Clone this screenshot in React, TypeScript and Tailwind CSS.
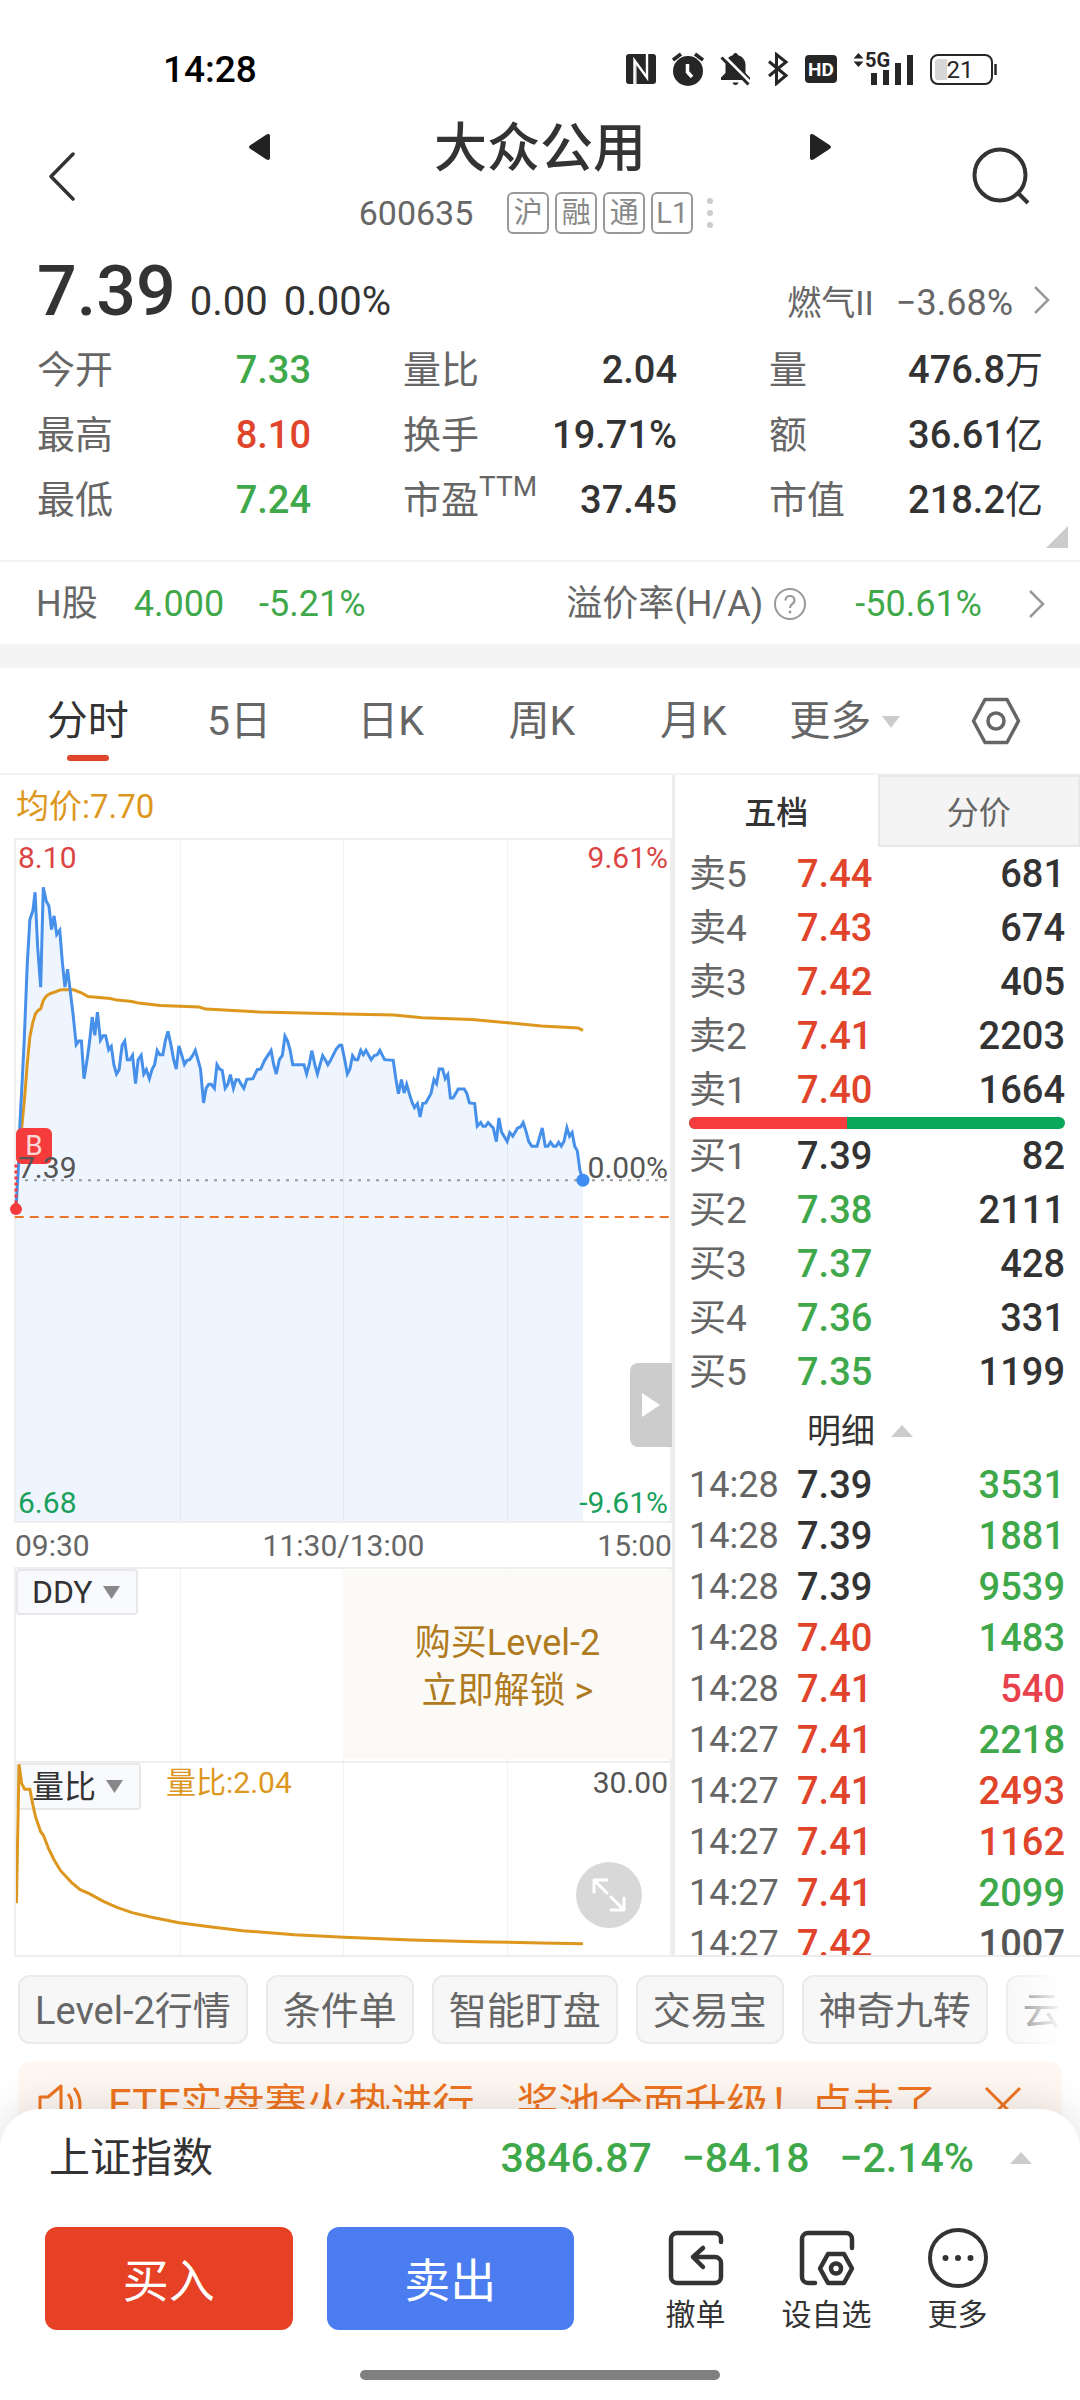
import React from 'react';

const PRICE_POINTS =
  '37,1137 43,1000 46,880 51,760 56,630 63,400 69,268 76,240 81,185 87,350 94,470 100,170 107,212 113,226 119,297 125,256 131,312 138,299 144,395 150,470 156,416 163,490 169,555 176,643 182,632 188,632 194,745 201,690 207,632 213,560 219,615 225,545 232,629 238,616 244,616 251,658 257,648 263,703 269,731 275,718 282,645 288,632 294,688 300,688 306,675 313,760 319,688 326,675 332,731 338,718 345,745 351,718 357,703 363,660 369,673 376,673 382,630 388,603 395,645 401,688 407,716 413,647 420,675 426,702 432,690 438,688 445,675 451,660 457,688 463,716 470,818 476,774 482,762 488,762 495,774 501,703 507,716 513,720 520,774 526,762 532,733 539,774 545,748 551,748 557,762 563,774 570,747 584,745 594,718 602,716 611,690 626,660 632,703 638,731 645,688 652,675 658,617 664,632 670,660 676,703 702,703 708,731 714,703 720,661 727,703 733,731 739,703 745,676 751,688 757,703 764,688 776,657 784,645 789,645 796,688 802,731 808,716 814,676 820,688 826,688 833,660 839,673 845,660 857,688 864,676 871,673 877,660 888,688 908,690 914,745 920,790 927,748 933,788 939,762 945,790 952,818 957,832 964,820 970,860 976,820 983,818 995,790 1002,748 1008,760 1014,716 1022,716 1028,745 1034,733 1040,803 1046,803 1052,790 1058,776 1072,776 1078,790 1084,818 1096,820 1102,888 1110,877 1115,888 1121,888 1127,877 1139,893 1146,934 1152,863 1158,905 1171,934 1177,907 1184,918 1195,893 1202,890 1208,877 1215,905 1221,934 1228,948 1240,948 1246,920 1252,893 1259,948 1265,948 1271,936 1278,948 1284,948 1290,936 1296,948 1302,934 1309,893 1315,918 1321,907 1327,948 1333,962 1339,1020 1346,1050';

const AVERAGE_POINTS =
  '43,1000 50,895 57,800 63,700 69,620 76,575 82,550 88,540 94,535 100,510 107,497 115,490 128,484 140,478 170,478 188,487 203,498 255,504 270,509 305,513 320,518 370,525 460,530 475,536 600,545 795,551 910,554 975,562 1090,567 1165,576 1250,587 1335,593 1346,600';

const RATIO_POINTS =
  '38,1210 44,793 50,850 57,868 69,868 76,915 82,950 94,995 100,1005 112,1045 125,1080 140,1112 165,1147 185,1169 205,1180 240,1205 270,1222 305,1238 350,1252 414,1268 475,1279 560,1292 680,1304 795,1312 950,1320 1100,1325 1250,1329 1346,1331';

const RED = 'text-[#e0442a]';
const GREEN = 'text-[#3fa84a]';
const DARK = 'text-[#333333]';

const STATS = [
  { label: '今开', value: '7.33', tone: GREEN },
  { label: '量比', value: '2.04', tone: DARK },
  { label: '量', value: '476.8', unit: '万', tone: DARK },
  { label: '最高', value: '8.10', tone: RED },
  { label: '换手', value: '19.71%', tone: DARK },
  { label: '额', value: '36.61', unit: '亿', tone: DARK },
  { label: '最低', value: '7.24', tone: GREEN },
  { label: '市盈', sup: 'TTM', value: '37.45', tone: DARK },
  { label: '市值', value: '218.2', unit: '亿', tone: DARK },
];

type Quote = [string, string, string, string];

const SELLS: Quote[] = [
  ['卖5', '7.44', RED, '681'],
  ['卖4', '7.43', RED, '674'],
  ['卖3', '7.42', RED, '405'],
  ['卖2', '7.41', RED, '2203'],
  ['卖1', '7.40', RED, '1664'],
];

const BUYS: Quote[] = [
  ['买1', '7.39', DARK, '82'],
  ['买2', '7.38', GREEN, '2111'],
  ['买3', '7.37', GREEN, '428'],
  ['买4', '7.36', GREEN, '331'],
  ['买5', '7.35', GREEN, '1199'],
];

const TRADES: [string, string, string, string, string][] = [
  ['14:28', '7.39', DARK, '3531', GREEN],
  ['14:28', '7.39', DARK, '1881', GREEN],
  ['14:28', '7.39', DARK, '9539', GREEN],
  ['14:28', '7.40', RED, '1483', GREEN],
  ['14:28', '7.41', RED, '540', 'text-[#e8414b]'],
  ['14:27', '7.41', RED, '2218', GREEN],
  ['14:27', '7.41', RED, '2493', RED],
  ['14:27', '7.41', RED, '1162', RED],
  ['14:27', '7.41', RED, '2099', GREEN],
  ['14:27', '7.42', RED, '1007', 'text-[#555555]'],
];

const CHIPS = ['Level-2行情', '条件单', '智能盯盘', '交易宝', '神奇九转', '云参数'];

function StatusBar() {
  return (
    <div className="flex h-[117px] items-center justify-between pt-[21px] pr-[83px] pl-[163px]">
      <time className="text-[37px] leading-none font-medium text-black">14:28</time>
      <div className="flex items-center gap-4 text-[#262626]">
        <svg width="30" height="30" viewBox="0 0 30 30" aria-label="NFC">
          <rect width="30" height="30" rx="3" fill="currentColor" />
          <path d="M8.500 30V6.500L21 23.500V0" fill="none" stroke="#fff" strokeWidth="2.400" />
          <path d="M10 9v21M21 0v18" fill="none" stroke="#fff" strokeWidth="1" />
        </svg>
        <svg width="32" height="34" viewBox="0 0 32 34" aria-label="闹钟">
          <circle cx="16" cy="19" r="15" fill="currentColor" />
          <path d="M1 8l8-6M31 8l-8-6" stroke="currentColor" strokeWidth="3.500" />
          <path d="M15.500 12v8l4.500 5" fill="none" stroke="#fff" strokeWidth="3.500" />
        </svg>
        <svg width="31" height="34" viewBox="0 0 31 34" aria-label="静音">
          <path d="M15.500 1c1.500 0 2.500 1 2.500 2.300 4.500 1.200 7.500 5 7.500 9.700v8l4.500 4.500V28H1v-2.500L5.500 21v-8c0-4.700 3-8.500 7.500-9.700C13 2 14 1 15.500 1z" fill="currentColor" />
          <path d="M12.500 30.500h6c-.5 1.700-1.500 2.500-3 2.500s-2.500-.8-3-2.500z" fill="currentColor" />
          <path d="M3.500 3.500l27 27" stroke="#fff" strokeWidth="3" />
          <path d="M1.500 5.500l27 27" stroke="currentColor" strokeWidth="3" />
        </svg>
        <svg width="22" height="34" viewBox="0 0 22 34" aria-label="蓝牙">
          <path d="M2 9.500l17 14-9.500 8v-29l9.500 7.500-17 14" fill="none" stroke="currentColor" strokeWidth="3" />
        </svg>
        <svg width="32" height="28" viewBox="0 0 32 28" aria-label="HD">
          <rect width="32" height="28" rx="4" fill="currentColor" />
          <text x="16" y="21" textAnchor="middle" fill="#fff" fontSize="19" fontWeight="700" fontFamily="Roboto">HD</text>
        </svg>
        <svg className="overflow-visible" width="61" height="34" viewBox="0 0 61 34" aria-label="5G">
          <path d="M5.500 1l5 5.500h-10zM5.500 15l5-5.500h-10z" fill="currentColor" />
          <text x="12" y="15" fill="currentColor" fontSize="20" fontWeight="700" fontFamily="Roboto">5G</text>
          <path d="M18 21h6v12h-6zM30 18h6v15h-6zM42 11h6v22h-6zM54 3h6v30h-6z" fill="currentColor" />
        </svg>
        <svg width="67" height="31" viewBox="0 0 67 31" aria-label="电量 21">
          <rect x="1" y="1" width="61" height="29" rx="7" fill="#fff" stroke="currentColor" strokeWidth="2" />
          <path d="M8 5h9v21H8a3 3 0 0 1-3-3V8a3 3 0 0 1 3-3z" fill="#d6d6d6" />
          <path d="M65.500 10v11" stroke="currentColor" strokeWidth="2.500" />
          <text x="30" y="24" textAnchor="middle" fill="currentColor" fontSize="24" fontFamily="Roboto">21</text>
        </svg>
      </div>
    </div>
  );
}

function Header() {
  return (
    <header className="flex items-center justify-between pr-[48px] pl-[46px]">
      <button className="w-[62px]" aria-label="返回">
        <svg width="32" height="50" viewBox="0 0 32 50" fill="none" stroke="#333" strokeWidth="3.500" strokeLinecap="round" strokeLinejoin="round">
          <path d="M27 3L5 25.500 27 48" />
        </svg>
      </button>
      <div className="w-[582px]">
        <div className="flex h-[60px] items-center justify-between">
          <button aria-label="上一只">
            <svg width="21" height="26" viewBox="0 0 21 26"><path d="M21 2v22c0 2-2 2.500-3.500 1.500L1.500 15c-2-1.300-2-2.700 0-4L17.500.6C19-.4 21 0 21 2z" fill="#222" /></svg>
          </button>
          <h1 className="pt-1 text-[53px] leading-none font-medium text-[#333333]">大众公用</h1>
          <button aria-label="下一只">
            <svg width="21" height="26" viewBox="0 0 21 26"><path d="M0 2v22c0 2 2 2.500 3.500 1.500L19.500 15c2-1.300 2-2.700 0-4L3.500.6C2-.4 0 0 0 2z" fill="#222" /></svg>
          </button>
        </div>
        <div className="mt-[15px] flex items-center justify-center gap-[6px] text-[#888888]">
          <span className="mr-7 text-[34px] leading-none text-[#666666]">600635</span>
          {['沪', '融', '通', 'L1'].map((t) => (
            <span key={t} className="flex h-[42px] w-[42px] items-center justify-center rounded-md border-2 border-[#999999] text-[29px] leading-none">
              {t}
            </span>
          ))}
          <svg width="22" height="32" viewBox="0 0 22 32" fill="#ccc"><circle cx="11" cy="4" r="3" /><circle cx="11" cy="16" r="3" /><circle cx="11" cy="28" r="3" /></svg>
        </div>
      </div>
      <button aria-label="搜索">
        <svg width="60" height="60" viewBox="0 0 60 60" fill="none" stroke="#333" strokeWidth="4">
          <circle cx="28" cy="29" r="25.500" />
          <path d="M46 47l10 10" />
        </svg>
      </button>
    </header>
  );
}

function Chevron() {
  return (
    <svg width="18" height="30" viewBox="0 0 18 30" fill="none" stroke="#999" strokeWidth="2.500">
      <path d="M2 2l13 13L2 28" />
    </svg>
  );
}

function Summary() {
  return (
    <section className="relative border-b-2 border-[#f3f3f3] px-[37px] pb-7">
      <div className="flex items-baseline pt-[22px] pb-[11px] text-[#333333]">
        <span className="text-[70px] leading-[70px] font-medium">7.39</span>
        <span className="ml-[14px] text-[40px] leading-none">0.00</span>
        <span className="ml-4 text-[40px] leading-none">0.00%</span>
        <a href="#sector" className="-mr-2 ml-auto flex items-baseline text-[36px] leading-none text-[#666666]">
          <span className="text-[34px]">燃气II</span>
          <span className="mr-5 ml-[22px]">−3.68%</span>
          <Chevron />
        </a>
      </div>
      <dl className="grid grid-cols-3 gap-x-[92px]">
        {STATS.map((s) => (
          <div key={s.label} className="flex h-[65px] items-center justify-between leading-none">
            <dt className="flex text-[38px] text-[#666666]">
              {s.label}
              {s.sup && <sup className="top-0 -mt-2 text-[28px] leading-none">{s.sup}</sup>}
            </dt>
            <dd className={`text-[38px] font-medium ${s.tone}`}>
              {s.value}
              {s.unit && <span className="font-normal">{s.unit}</span>}
            </dd>
          </div>
        ))}
      </dl>
      <svg className="absolute right-3 bottom-3" width="22" height="22" viewBox="0 0 22 22"><path d="M22 0v22H0z" fill="#ccc" /></svg>
    </section>
  );
}

function HShare() {
  return (
    <a href="#h-share" className="flex h-[82px] items-center pt-[2px] pr-[34px] pl-[36px] text-[36px] leading-none text-[#666666]">
      <span>H股</span>
      <span className="ml-9 text-[#3fa84a]">4.000</span>
      <span className="ml-[35px] text-[#3fa84a]">-5.21%</span>
      <span className="ml-auto">溢价率(H/A)</span>
      <svg className="ml-[10px]" width="34" height="34" viewBox="0 0 34 34">
        <circle cx="17" cy="17" r="15" fill="none" stroke="#999" strokeWidth="2" />
        <path d="M12.500 13.500c0-6 9-6 9 0 0 3.500-4.500 3.500-4.500 7.500" fill="none" stroke="#999" strokeWidth="2.200" />
        <circle cx="17" cy="25" r="1.500" fill="#999" />
      </svg>
      <span className="mr-[46px] ml-12 text-[#3fa84a]">-50.61%</span>
      <Chevron />
    </a>
  );
}

function PeriodTabs() {
  return (
    <nav className="grid h-[107px] grid-cols-7 border-b-2 border-[#f3f3f3] pr-2 pl-3 text-[41px] leading-none text-[#666666]">
      {['分时', '5日', '日K', '周K', '月K'].map((t, i) => (
        <button key={t} className={i === 0 ? 'relative pt-[2px] text-[#333333]' : 'pt-[2px]'}>
          {t}
          {i === 0 && <span className="absolute bottom-3 left-1/2 h-[6px] w-[42px] -translate-x-1/2 rounded-full bg-[#e0442a]" />}
        </button>
      ))}
      <button className="flex items-center justify-center gap-[11px] pt-[2px]">
        更多
        <svg width="18" height="12" viewBox="0 0 18 12"><path d="M0 0h18L9 12z" fill="#ccc" /></svg>
      </button>
      <button className="flex items-center justify-center" aria-label="设置">
        <svg width="50" height="48" viewBox="0 0 50 48" fill="none" stroke="#666" strokeWidth="3.500" strokeLinejoin="round">
          <path d="M14 2.500h22L47.500 24 36 45.500H14L2.500 24z" />
          <circle cx="25" cy="24" r="8" />
        </svg>
      </button>
    </nav>
  );
}

function Grid() {
  return (
    <>
      <span className="absolute inset-y-0 left-1/4 w-px bg-black/5" />
      <span className="absolute inset-y-0 left-1/2 w-px bg-black/5" />
      <span className="absolute inset-y-0 left-3/4 w-px bg-black/5" />
    </>
  );
}

function DownMark() {
  return <svg width="17" height="13" viewBox="0 0 17 13"><path d="M0 0h17L8.500 13z" fill="#888" /></svg>;
}

function Charts() {
  return (
    <section className="min-w-0 text-[30px] leading-none">
      <p className="flex h-[63px] items-center pl-4 text-[33px] text-[#dd971e]">均价:7.70</p>
      <div className="relative ml-[14px] h-[685px] border-2 border-[#eeeeee]">
        <svg className="absolute inset-0 h-full w-full overflow-visible" viewBox="37 28 1510 2046" preserveAspectRatio="none" fill="none">
          <polygon points={`${PRICE_POINTS} 1346,2074 37,2074`} fill="#eef5fe" />
          <path d="M37 1050H1547" stroke="#999" strokeWidth="2" strokeDasharray="3 6" vectorEffect="non-scaling-stroke" />
          <path d="M34 1161H1547" stroke="#ec7429" strokeWidth="2" strokeDasharray="9 6" vectorEffect="non-scaling-stroke" />
          <polyline points={AVERAGE_POINTS} stroke="#dd971e" strokeWidth="3" vectorEffect="non-scaling-stroke" />
          <polyline points={PRICE_POINTS} stroke="#4690ea" strokeWidth="3" vectorEffect="non-scaling-stroke" />
          <path d="M37 1003V1137" stroke="#f53b3b" strokeWidth="3" strokeDasharray="3 3" vectorEffect="non-scaling-stroke" />
          <path d="M37 1137h.01" stroke="#f53b3b" strokeWidth="12" strokeLinecap="round" vectorEffect="non-scaling-stroke" />
          <path d="M1346 1050h.01" stroke="#3f8cf3" strokeWidth="13" strokeLinecap="round" vectorEffect="non-scaling-stroke" />
        </svg>
        <span className="absolute top-[288px] left-0 flex h-9 w-9 items-center justify-center rounded-md bg-[#f53b3b] text-[28px] text-white/80">B</span>
        <Grid />
        <span className="absolute top-[3px] left-[2px] text-[#dc4444]">8.10</span>
        <span className="absolute top-[3px] right-[2px] text-[#dc4444]">9.61%</span>
        <span className="absolute top-[313px] left-[2px] text-[#555555]">7.39</span>
        <span className="absolute top-[313px] right-[2px] text-[#555555]">0.00%</span>
        <span className="absolute bottom-[3px] left-[2px] text-[#1ba05c]">6.68</span>
        <span className="absolute right-[2px] bottom-[3px] text-[#1ba05c]">-9.61%</span>
        <button className="absolute top-[523px] -right-[2px] flex h-[84px] w-[42px] items-center justify-center rounded-l-lg bg-[#cccccc]" aria-label="展开">
          <svg width="18" height="24" viewBox="0 0 18 24"><path d="M0 0l18 12L0 24z" fill="#fff" /></svg>
        </button>
      </div>
      <div className="flex h-11 items-center justify-between pt-[2px] pl-[15px] text-[#666666]">
        <span>09:30</span>
        <span>11:30/13:00</span>
        <span>15:00</span>
      </div>
      <div className="relative ml-[14px] h-[194px] border-2 border-b-0 border-[#eeeeee]">
        <Grid />
        <button className="absolute top-0 left-0 flex h-[46px] items-center gap-[10px] rounded-sm border-2 border-[#e8e8e8] bg-[#f9fafe] pr-4 pl-[14px] text-[32px] text-[#333333]">
          DDY
          <DownMark />
        </button>
        <a href="#level2" className="absolute top-px -right-[2px] bottom-[2px] left-1/2 flex flex-col items-center justify-center bg-[#fbfaf6] pt-1 text-center text-[36px] leading-[48px] text-[#b07a1f]">
          <span>购买Level-2</span>
          <span>立即解锁 &gt;</span>
        </a>
      </div>
      <div className="relative ml-[14px] h-[196px] border-2 border-[#eeeeee]">
        <Grid />
        <button className="absolute top-0 left-0 flex h-[47px] items-center gap-[10px] rounded-sm border-2 border-[#e8e8e8] bg-[#f9fafe] pr-4 pl-[14px] text-[32px] text-[#333333]">
          量比
          <DownMark />
        </button>
        <svg className="absolute inset-0 h-full w-full" viewBox="37 789 1510 576" preserveAspectRatio="none" fill="none">
          <polyline points={RATIO_POINTS} stroke="#dd971e" strokeWidth="3" vectorEffect="non-scaling-stroke" />
        </svg>
        <span className="absolute top-[5px] left-[150px] text-[#dd971e]">量比:2.04</span>
        <span className="absolute top-[5px] right-[2px] text-[#555555]">30.00</span>
        <button className="absolute right-[28px] bottom-[27px] flex h-[66px] w-[66px] items-center justify-center rounded-full bg-[#d8d8d8]" aria-label="全屏">
          <svg width="34" height="34" viewBox="0 0 34 34" fill="none" stroke="#fff" strokeWidth="3" strokeLinecap="round" strokeLinejoin="round">
            <path d="M2 14V2h13M2 2l13 13M32 20v12H19M32 32L19 19" />
          </svg>
        </button>
      </div>
    </section>
  );
}

function QuoteTable({ rows, label }: { rows: Quote[]; label: string }) {
  return (
    <table className="w-full table-fixed" aria-label={label}>
      <tbody>
        {rows.map(([name, price, tone, volume]) => (
          <tr key={name} className="h-[54px] text-[38px] leading-none font-medium">
            <th scope="row" className="w-[108px] p-0 text-left text-[37px] font-normal text-[#666666]">{name}</th>
            <td className={`p-0 ${tone}`}>{price}</td>
            <td className="p-0 text-right text-[#333333]">{volume}</td>
          </tr>
        ))}
      </tbody>
    </table>
  );
}

function OrderBook() {
  return (
    <section className="h-[1182px] min-w-0 overflow-hidden border-b-2 border-l-[3px] border-[#ececec] leading-none">
      <div className="grid h-[72px] grid-cols-2 text-[32px]">
        <button className="pt-1 font-medium text-[#333333]">五档</button>
        <button className="border-2 border-[#e8e8e8] bg-[#f4f4f4] pt-1 text-[#666666]">分价</button>
      </div>
      <div className="pr-[15px] pl-[14px]">
        <QuoteTable rows={SELLS} label="卖盘" />
        <div className="flex h-3 overflow-hidden rounded-full bg-[#09a85a]">
          <span className="w-[42%] bg-[#f53d3d]" />
        </div>
        <QuoteTable rows={BUYS} label="买盘" />
        <button className="flex h-[60px] w-full items-center justify-center gap-4 pt-1 pr-[34px] text-[34px] text-[#333333]">
          明细
          <svg width="22" height="12" viewBox="0 0 22 12"><path d="M0 12L11 0l11 12z" fill="#ccc" /></svg>
        </button>
        <table className="w-full table-fixed" aria-label="成交明细">
          <tbody>
            {TRADES.map(([time, price, tone, volume, volumeTone], i) => (
              <tr key={i} className="h-[51px] text-[38px] leading-none font-medium">
                <td className="w-[108px] p-0 text-[36px] font-normal text-[#666666]">{time}</td>
                <td className={`p-0 ${tone}`}>{price}</td>
                <td className={`p-0 text-right ${volumeTone}`}>{volume}</td>
              </tr>
            ))}
          </tbody>
        </table>
      </div>
    </section>
  );
}

function Shortcuts() {
  return (
    <div className="relative mx-[18px] flex gap-[18px] overflow-hidden pt-[18px]">
      {CHIPS.map((c) => (
        <button key={c} className="h-[69px] shrink-0 rounded-xl border-2 border-[#eaeaea] bg-[#f7f7f7] px-[15px] pt-[2px] text-[38px] leading-none whitespace-nowrap text-[#666666]">
          {c}
        </button>
      ))}
      <span className="absolute inset-y-0 right-0 w-16 bg-linear-to-r from-white/0 to-white" />
    </div>
  );
}

function Banner() {
  return (
    <div className="mx-[18px] mt-[18px] flex h-[86px] shrink-0 items-center rounded-xl bg-[#fff7f1] pr-10 pl-5 text-[#ee7420]">
      <svg className="shrink-0" width="44" height="44" viewBox="0 0 44 44" fill="none" stroke="currentColor" strokeWidth="3" strokeLinejoin="round">
        <path d="M2 14h8L23 3v38L10 30H2zM30 11c5 6 5 16 0 22M36 5c8 9 8 25 0 34" />
      </svg>
      <a href="#etf" className="ml-[26px] truncate text-[42px] leading-[60px]">ETF实盘赛火热进行，奖池全面升级！点击了</a>
      <button className="ml-auto shrink-0" aria-label="关闭">
        <svg width="38" height="38" viewBox="0 0 38 38" stroke="currentColor" strokeWidth="3"><path d="M2 2l34 34M36 2L2 36" /></svg>
      </button>
    </div>
  );
}

function BottomSheet() {
  return (
    <footer className="relative z-10 -mt-10 shrink-0 rounded-t-[40px] bg-white shadow-[0_-4px_40px_rgba(0,0,0,0.12)]">
      <button className="flex h-[98px] w-full items-center pr-[48px] pl-[49px] text-[41px] leading-none">
        <span className="text-[#333333]">上证指数</span>
        <span className="ml-auto flex gap-[30px] font-medium text-[#3fa84a]">
          <span>3846.87</span>
          <span>−84.18</span>
          <span>−2.14%</span>
        </span>
        <svg className="ml-9" width="22" height="12" viewBox="0 0 22 12"><path d="M0 12L11 0l11 12z" fill="#ccc" /></svg>
      </button>
      <div className="flex items-center pt-5 pr-[57px] pl-[45px]">
        <div className="grid flex-1 grid-cols-2 gap-[34px] text-[46px] leading-none text-white">
          <button className="h-[103px] rounded-xl bg-[#e64124] pt-1">买入</button>
          <button className="h-[103px] rounded-xl bg-[#4c7df0] pt-1">卖出</button>
        </div>
        <div className="ml-14 grid w-[393px] grid-cols-3 text-[30px] leading-none text-[#333333]">
          <button className="flex flex-col items-center gap-3">
            <svg width="60" height="60" viewBox="0 0 60 60" fill="none" stroke="currentColor" strokeWidth="4.500" strokeLinecap="round" strokeLinejoin="round">
              <path d="M55 14V11a6 6 0 0 0-6-6H11a6 6 0 0 0-6 6v38a6 6 0 0 0 6 6h38a6 6 0 0 0 6-6V35a6 6 0 0 0-6-6H27M37 20l-10 9 10 10" />
            </svg>
            撤单
          </button>
          <button className="flex flex-col items-center gap-3">
            <svg width="60" height="60" viewBox="0 0 60 60" fill="none" stroke="currentColor" strokeWidth="4.500" strokeLinecap="round" strokeLinejoin="round">
              <path d="M55 20V11a6 6 0 0 0-6-6H11a6 6 0 0 0-6 6v38a6 6 0 0 0 6 6h7" />
              <path d="M31 26h16l8 14.500L47 55H31l-8-14.500z" />
              <circle cx="39" cy="40.500" r="5" />
            </svg>
            设自选
          </button>
          <button className="flex flex-col items-center gap-3">
            <svg width="60" height="60" viewBox="0 0 60 60" fill="none" stroke="currentColor" strokeWidth="4">
              <circle cx="30" cy="30" r="28" />
              <path d="M17.500 30h.01M30 30h.01M42.500 30h.01" strokeWidth="6" strokeLinecap="round" />
            </svg>
            更多
          </button>
        </div>
      </div>
      <div className="mx-auto mt-10 mb-5 h-[10px] w-1/3 rounded-full bg-[#808080]" />
    </footer>
  );
}

export default function App() {
  return (
    <div className="flex h-screen flex-col overflow-hidden bg-white font-[Roboto,'Noto_Sans_CJK_SC',sans-serif]">
      <main className="min-h-0 flex-1 overflow-hidden">
        <StatusBar />
        <Header />
        <Summary />
        <HShare />
        <div className="h-6 bg-[#f4f4f4]" />
        <PeriodTabs />
        <div className="grid grid-cols-[672fr_408fr]">
          <Charts />
          <OrderBook />
        </div>
        <Shortcuts />
        <Banner />
      </main>
      <BottomSheet />
    </div>
  );
}
